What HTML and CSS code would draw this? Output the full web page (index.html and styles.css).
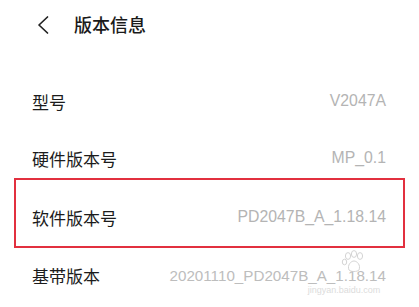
FILE: index.html
```html
<!DOCTYPE html>
<html lang="zh-CN">
<head>
<meta charset="utf-8">
<title>版本信息</title>
<link rel="stylesheet" href="styles.css">
</head>
<body>
<div class="screen">
  <header class="topbar">
    <svg class="back" width="14" height="20" viewBox="0 0 14 20" aria-hidden="true">
      <polyline points="10.5,2 2,10 10.5,18" fill="none" stroke="#222" stroke-width="1.7" stroke-linecap="round" stroke-linejoin="round"/>
    </svg>
    <h1 class="title">版本信息</h1>
  </header>
  <div class="list">
    <div class="row row-first"><span class="label">型号</span><span class="value">V2047A</span></div>
    <div class="row row-second"><span class="label">硬件版本号</span><span class="value">MP_0.1</span></div>
    <div class="highlight">
      <div class="row"><span class="label">软件版本号</span><span class="value">PD2047B_A_1.18.14</span></div>
    </div>
    <div class="row row-last"><span class="label">基带版本</span><span class="value">20201110_PD2047B_A_1.18.14</span></div>
  </div>
  <div class="watermark">
    <svg class="wm-paw" width="26" height="24" viewBox="0 0 26 24" aria-hidden="true">
      <g fill="none" stroke="#d4d4d4" stroke-width="1">
        <ellipse cx="7" cy="6" rx="2.6" ry="3.4"/>
        <ellipse cx="13" cy="4" rx="2.6" ry="3.4"/>
        <ellipse cx="19" cy="6" rx="2.6" ry="3.4"/>
        <ellipse cx="3.5" cy="12" rx="2.2" ry="2.8"/>
        <path d="M8 20 C6 15 10 11 13 11 C16 11 20 15 18 20 C16 22 10 22 8 20 Z"/>
      </g>
    </svg>
    <span class="wm-url">jingyan.baidu.com</span>
  </div>
</div>
</body>
</html>
```
FILE: styles.css
```css
html, body {
  margin: 0;
  padding: 0;
  background: #ffffff;
}
.screen {
  position: relative;
  width: 419px;
  height: 307px;
  overflow: hidden;
  font-family: "Noto Sans CJK SC", "Liberation Sans", sans-serif;
}
.topbar {
  height: 48px;
  display: flex;
  align-items: center;
  padding-left: 37px;
  box-sizing: border-box;
}
.back {
  display: block;
  margin-top: 2px;
}
.title {
  margin: 0 0 0 23px;
  font-size: 18px;
  font-weight: 500;
  color: #1a1a1a;
  line-height: 24px;
}
.list {
  padding: 33px 14px 0 14px;
  display: flex;
  flex-direction: column;
}
.row {
  height: 40px;
  display: flex;
  align-items: center;
  justify-content: space-between;
  padding: 0 19px 0 18px;
}
.row-second {
  margin-top: 17px;
}
.highlight {
  border: 2px solid #e2303f;
  height: 70px;
  box-sizing: border-box;
  padding-top: 17px;
}
.highlight .row {
  padding: 0 17px 0 16px;
}
.row-last {
  margin-top: 7px;
}
.label {
  font-size: 17px;
  color: #1c1c1c;
  font-family: "Noto Sans CJK SC", sans-serif;
}
.value {
  font-family: "Liberation Sans", Arial, sans-serif;
  font-size: 15.8px;
  color: #b4b4b4;
  white-space: nowrap;
}
.row-last .value {
  font-size: 15.2px;
  color: #bdbdbd;
}
.watermark {
  position: absolute;
  left: 296px;
  top: 250px;
  width: 96px;
  display: flex;
  flex-direction: column;
  align-items: center;
  pointer-events: none;
}
.wm-paw {
  display: block;
  margin-left: 20px;
}
.wm-url {
  font-family: "Liberation Sans", sans-serif;
  font-size: 9px;
  color: #dcdcdc;
  line-height: 12px;
  margin-top: 10px;
}
```
